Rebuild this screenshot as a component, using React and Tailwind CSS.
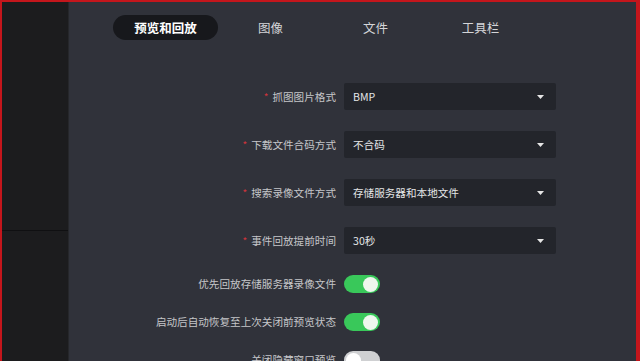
import { useState } from 'react';

const tabs = ['预览和回放', '图像', '文件', '工具栏'];

const selects = [
    { label: '抓图图片格式', value: 'BMP' },
    { label: '下载文件合码方式', value: '不合码' },
    { label: '搜索录像文件方式', value: '存储服务器和本地文件' },
    { label: '事件回放提前时间', value: '30秒' },
];

const toggles = [
    { label: '优先回放存储服务器录像文件', on: true },
    { label: '启动后自动恢复至上次关闭前预览状态', on: true },
    { label: '关闭隐藏窗口预览', on: false },
];

function Toggle({ on }) {
    return (
        <div className={`w-[36px] h-[18px] rounded-full flex items-center px-[2px] ${on ? 'bg-[#39c85a] justify-end' : 'bg-[#cfd0d2] justify-start'}`}>
            <div className={`w-[15px] h-[15px] rounded-full ${on ? 'bg-[#eef7ee]' : 'bg-white'}`} />
        </div>
    );
}

export default function App() {
    const [active, setActive] = useState(0);

    return (
        <div
            className="w-[640px] h-[361px] overflow-hidden flex bg-[#30323a] border-t-2 border-l-2 border-r-[4px] border-[#c4161c]"
            style={{ fontFamily: '"Noto Sans CJK SC", "Noto Sans", sans-serif' }}
        >
            {/* sidebar */}
            <div className="w-[67px] shrink-0 bg-[#1c1c1e] border-r border-[#26272b] flex flex-col">
                <div className="h-[229px] border-b border-[#101012]" />
            </div>

            {/* main */}
            <div className="flex-1 flex flex-col">
                <div className="flex pt-[13px] pl-[44px]">
                    {tabs.map((t, i) => (
                        <button
                            key={t}
                            onClick={() => setActive(i)}
                            className={`w-[105px] h-[25px] pt-[2px] rounded-full flex items-center justify-center text-[12.5px] leading-none ${
                                active === i ? 'bg-[#17181c] text-white font-bold' : 'text-[#d4d5d8]'
                            }`}
                        >
                            {t}
                        </button>
                    ))}
                </div>

                <div className="flex flex-col mt-[43px]">
                    {selects.map((s) => (
                        <div key={s.label} className="flex items-center h-[27px] mb-[21px]">
                            <div className="w-[267px] flex justify-end items-center text-[10.6px] text-[#c5c6c9]">
                                <span className="text-[#d0343c] mr-[4px] text-[10px]">*</span>
                                {s.label}
                            </div>
                            <div className="ml-[8px] w-[212px] h-[27px] bg-[#23252b] rounded-[2px] flex items-center justify-between pl-[9px] pr-[12px] text-[10.6px] text-[#e4e5e7]">
                                <span>{s.value}</span>
                                <svg width="7" height="4" viewBox="0 0 7 4">
                                    <path d="M0 0 L7 0 L3.5 4 Z" fill="#e6e6e6" />
                                </svg>
                            </div>
                        </div>
                    ))}

                    {toggles.map((t) => (
                        <div key={t.label} className="flex items-center h-[18px] mb-[20px]">
                            <div className="w-[267px] text-right text-[10.6px] text-[#c5c6c9]">{t.label}</div>
                            <div className="ml-[8px]">
                                <Toggle on={t.on} />
                            </div>
                        </div>
                    ))}
                </div>
            </div>
        </div>
    );
}
